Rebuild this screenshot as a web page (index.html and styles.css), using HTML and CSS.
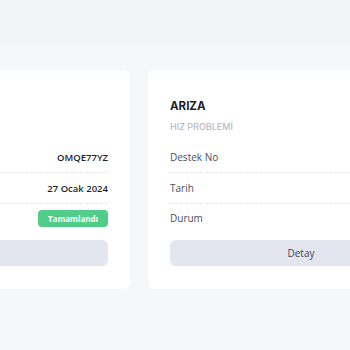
FILE: index.html
```html
<!DOCTYPE html>
<html lang="tr">
<head>
    <meta charset="UTF-8">
    <meta name="viewport" content="width=device-width, initial-scale=1.0">
    <title>Destek Talepleri</title>
    <link rel="stylesheet" href="styles.css">
</head>
<body>
    <div class="topbar"></div>
    <div class="cards">
        <div class="card">
            <h3 class="title">BAĞLANTI</h3>
            <p class="subtitle">KOPMA PROBLEMİ</p>
            <div class="row"><span class="label">Destek No</span><span class="value">OMQE77YZ</span></div>
            <div class="row"><span class="label">Tarih</span><span class="value">27 Ocak 2024</span></div>
            <div class="row last"><span class="label">Durum</span><span class="badge">Tamamlandı</span></div>
            <button class="detail">Detay</button>
        </div>
        <div class="card">
            <h3 class="title">ARIZA</h3>
            <p class="subtitle">HIZ PROBLEMİ</p>
            <div class="row"><span class="label">Destek No</span><span class="value">KXRT41PA</span></div>
            <div class="row"><span class="label">Tarih</span><span class="value">12 Şubat 2024</span></div>
            <div class="row last"><span class="label">Durum</span><span class="badge">Tamamlandı</span></div>
            <button class="detail">Detay</button>
        </div>
    </div>
</body>
</html>
```

FILE: styles.css
```css
body { margin: 0; background-color: #f6f7f9; font-family: "Open Sans", "Lato", sans-serif; color: #3f4254; }
.topbar { height: 46px; background-color: #f2f4f7; }
.cards { display: flex; gap: 18px; margin-left: -176px; padding-top: 24px; }
.card { flex: 0 0 306px; box-sizing: border-box; background-color: white; border-radius: 6px; padding: 28px 22px 23px 22px; box-shadow: 0 0 4px rgba(0, 0, 0, 0.02); }
.title { margin: 0; font-family: "Inter", sans-serif; font-size: 11.5px; font-weight: 700; color: #1e1e2d; line-height: 16px; }
.subtitle { margin: 7px 0 9px 0; font-family: "Inter", sans-serif; font-size: 9px; font-weight: 500; color: #b9bac5; line-height: 12px; }
.row { display: flex; justify-content: space-between; align-items: center; height: 30px; border-bottom: 1px dashed #e6e7ec; font-size: 10px; }
.row.last { border-bottom: none; height: 28px; }
.label { color: #4b4d5c; }
.value { color: #1e1e2d; font-weight: 600; font-size: 9.5px; }
.badge { background-color: #50cd89; color: white; font-weight: 700; font-size: 8px; border-radius: 4px; padding: 0 6px; height: 17px; line-height: 17px; width: 58px; text-align: center; }
.detail { display: block; width: 100%; margin-top: 8px; height: 26px; border: none; border-radius: 6px; background-color: #e4e6ef; color: #3f4254; font-family: "Open Sans", sans-serif; font-size: 10px; font-weight: 500; }
```
